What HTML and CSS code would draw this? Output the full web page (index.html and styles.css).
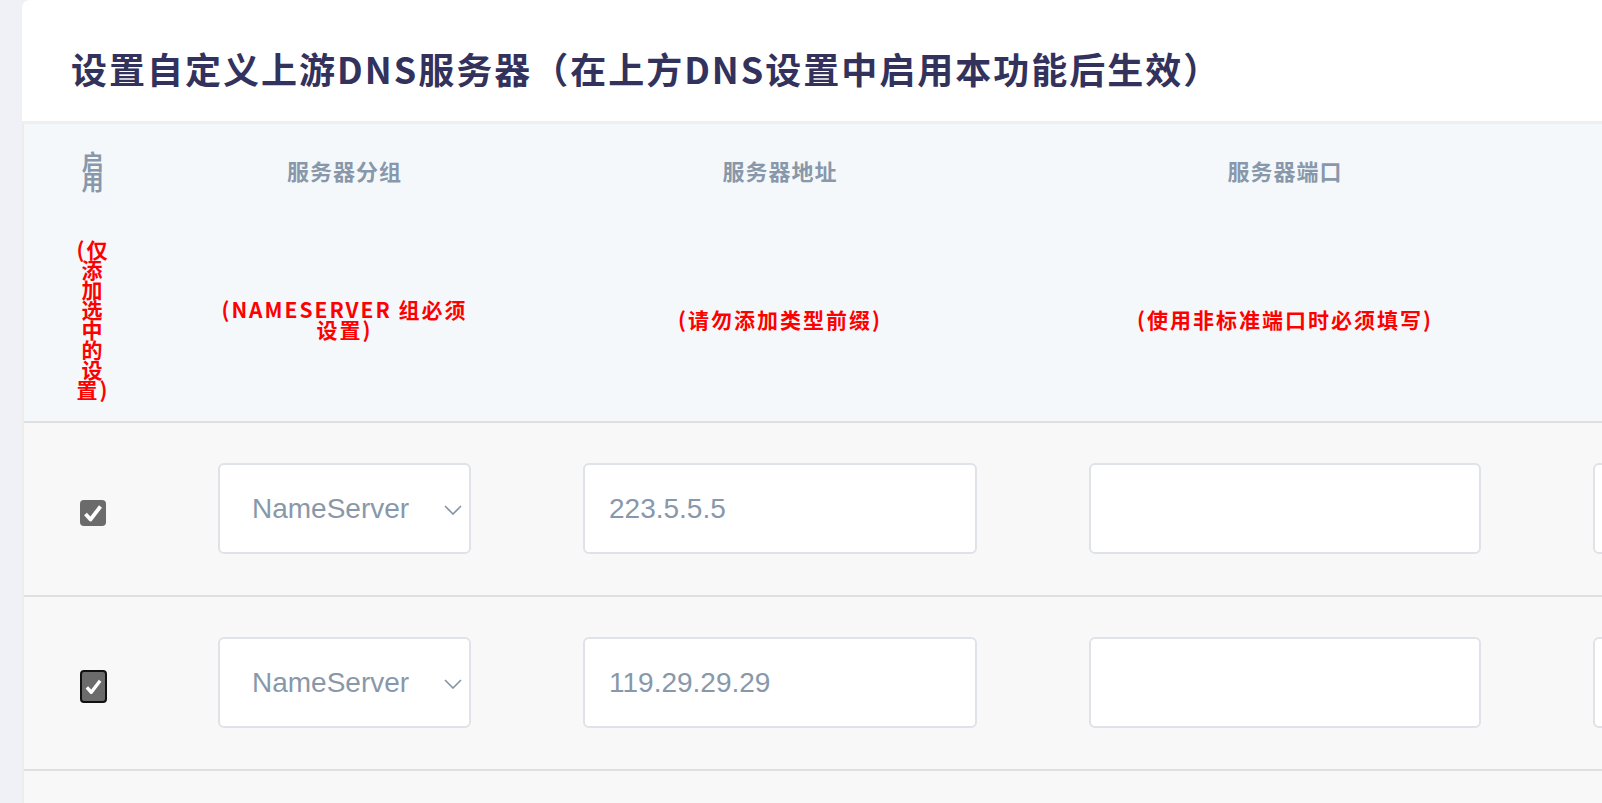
FILE: index.html
```html
<!DOCTYPE html>
<html lang="zh-CN">
<head>
<meta charset="utf-8">
<title>DNS 设置</title>
<link rel="stylesheet" href="styles.css">
</head>
<body>
<div class="page">
  <div class="card">
    <div class="card-header">
      <h3 class="title">设置自定义上游DNS服务器（在上方DNS设置中启用本功能后生效）</h3>
    </div>
    <div class="table-wrap">
      <table class="dns-table">
        <colgroup>
          <col class="c1"><col class="c2"><col class="c3"><col class="c4"><col class="c5">
        </colgroup>
        <thead>
          <tr>
            <th class="th-enable"><div class="hcell hcell-narrow"><div class="h-title">启用</div><div class="h-note">(仅添加选中的设置)</div></div></th>
            <th><div class="hcell"><div class="h-title">服务器分组</div><div class="h-note">(NAMESERVER 组必须设置)</div></div></th>
            <th><div class="hcell"><div class="h-title">服务器地址</div><div class="h-note">(请勿添加类型前缀)</div></div></th>
            <th><div class="hcell"><div class="h-title">服务器端口</div><div class="h-note">(使用非标准端口时必须填写)</div></div></th>
            <th><div class="hcell"><div class="h-title"></div><div class="h-note"></div></div></th>
          </tr>
        </thead>
        <tbody>
          <tr>
            <td class="td-check"><span class="cbox"><svg viewBox="0 0 26 26" width="26" height="26"><polyline points="5.5,14 10.5,19.5 20.5,6.5" fill="none" stroke="#fff" stroke-width="3.8" stroke-linejoin="round"/></svg></span></td>
            <td><div class="select-wrap"><select class="field select"><option>NameServer</option></select><svg class="chev" viewBox="0 0 18 10" width="18" height="10"><polyline points="1,1 9,9 17,1" fill="none" stroke="#8392a5" stroke-width="1.6"/></svg></div></td>
            <td><input class="field" type="text" value="223.5.5.5"></td>
            <td><input class="field" type="text" value=""></td>
            <td><input class="field" type="text" value=""></td>
          </tr>
          <tr>
            <td class="td-check"><span class="cbox cbox-focus"><svg viewBox="0 0 26 26" width="26" height="26"><polyline points="5.5,14 10.5,19.5 20.5,6.5" fill="none" stroke="#fff" stroke-width="3.8" stroke-linejoin="round"/></svg></span></td>
            <td><div class="select-wrap"><select class="field select"><option>NameServer</option></select><svg class="chev" viewBox="0 0 18 10" width="18" height="10"><polyline points="1,1 9,9 17,1" fill="none" stroke="#8392a5" stroke-width="1.6"/></svg></div></td>
            <td><input class="field" type="text" value="119.29.29.29"></td>
            <td><input class="field" type="text" value=""></td>
            <td><input class="field" type="text" value=""></td>
          </tr>
          <tr>
            <td class="td-check"></td>
            <td><div class="select-wrap"><select class="field select"><option>NameServer</option></select><svg class="chev" viewBox="0 0 18 10" width="18" height="10"><polyline points="1,1 9,9 17,1" fill="none" stroke="#8392a5" stroke-width="1.6"/></svg></div></td>
            <td><input class="field" type="text" value=""></td>
            <td><input class="field" type="text" value=""></td>
            <td><input class="field" type="text" value=""></td>
          </tr>
        </tbody>
      </table>
    </div>
  </div>
</div>
</body>
</html>
```

FILE: styles.css
```css
html, body {
  margin: 0;
  padding: 0;
}

body {
  background: #eff1f6;
  overflow: hidden;
  font-family: "Noto Sans CJK SC", "Noto Sans", sans-serif;
}

.page {
  padding-left: 22px;
  width: 2100px;
}

.card {
  background: #fff;
  border-top-left-radius: 8px;
}

.card-header {
  height: 124px;
  box-sizing: border-box;
  padding: 17px 0 0 49px;
  display: flex;
  align-items: center;
  border-bottom: 3px solid #efefef;
}

.title {
  margin: 0;
  font-size: 36px;
  font-weight: 700;
  letter-spacing: 2px;
  line-height: 1.2;
  color: #32325d;
  white-space: nowrap;
}

.table-wrap {
  border-left: 2px solid #ececec;
}

.dns-table {
  border-collapse: separate;
  border-spacing: 0;
  table-layout: fixed;
  width: 2017px;
}

col.c1 { width: 138px; }
col.c2 { width: 365px; }
col.c3 { width: 506px; }
col.c4 { width: 504px; }
col.c5 { width: 504px; }

.dns-table thead th {
  background: #f5f8fb;
  padding: 0;
  border-bottom: 2px solid #dfdfdf;
  vertical-align: top;
  font-weight: 700;
}

.hcell {
  height: 297px;
  box-sizing: border-box;
  padding: 0 56px;
  display: flex;
  flex-direction: column;
}

.hcell-narrow {
  padding: 0 51px;
}

.h-title {
  height: 92px;
  display: flex;
  align-items: center;
  justify-content: center;
  text-align: center;
  font-size: 22px;
  font-weight: 700;
  letter-spacing: 1px;
  line-height: 20px;
  color: #8898aa;
}

.h-note {
  flex: 1;
  display: flex;
  align-items: center;
  justify-content: center;
  text-align: center;
  font-size: 21px;
  font-weight: 700;
  letter-spacing: 2px;
  line-height: 20px;
  color: #ff0000;
}

.dns-table tbody td {
  background: #f8f8f8;
  border-bottom: 2px solid #dfdfdf;
  padding: 40px 56px 41px;
  vertical-align: middle;
}

.dns-table tbody td.td-check {
  padding: 40px 0 41px;
  text-align: center;
}

.cbox {
  display: block;
  width: 26px;
  height: 26px;
  margin: 9px auto 0;
  background: #6b6b6b;
  border-radius: 4px;
  box-sizing: border-box;
  position: relative;
}

.cbox svg {
  display: block;
}

.cbox-focus {
  width: 27px;
  height: 33px;
  margin-top: 8px;
  border: 2px solid #111;
  border-radius: 4px;
  display: flex;
  align-items: center;
  justify-content: center;
}

.cbox-focus svg {
  width: 23px;
  height: 23px;
}

.field {
  display: block;
  box-sizing: border-box;
  width: 100%;
  height: 91px;
  margin: 0;
  border: 2px solid #dfe2e7;
  border-radius: 6px;
  background: #fff;
  padding: 0 24px;
  font-family: "Liberation Sans", Arial, sans-serif;
  font-size: 28px;
  color: #8898aa;
  outline: none;
}

.select-wrap {
  position: relative;
}

.select {
  -webkit-appearance: none;
  appearance: none;
  padding-left: 32px;
}

.chev {
  position: absolute;
  right: 9px;
  top: 50%;
  margin-top: -4px;
  pointer-events: none;
}
```
